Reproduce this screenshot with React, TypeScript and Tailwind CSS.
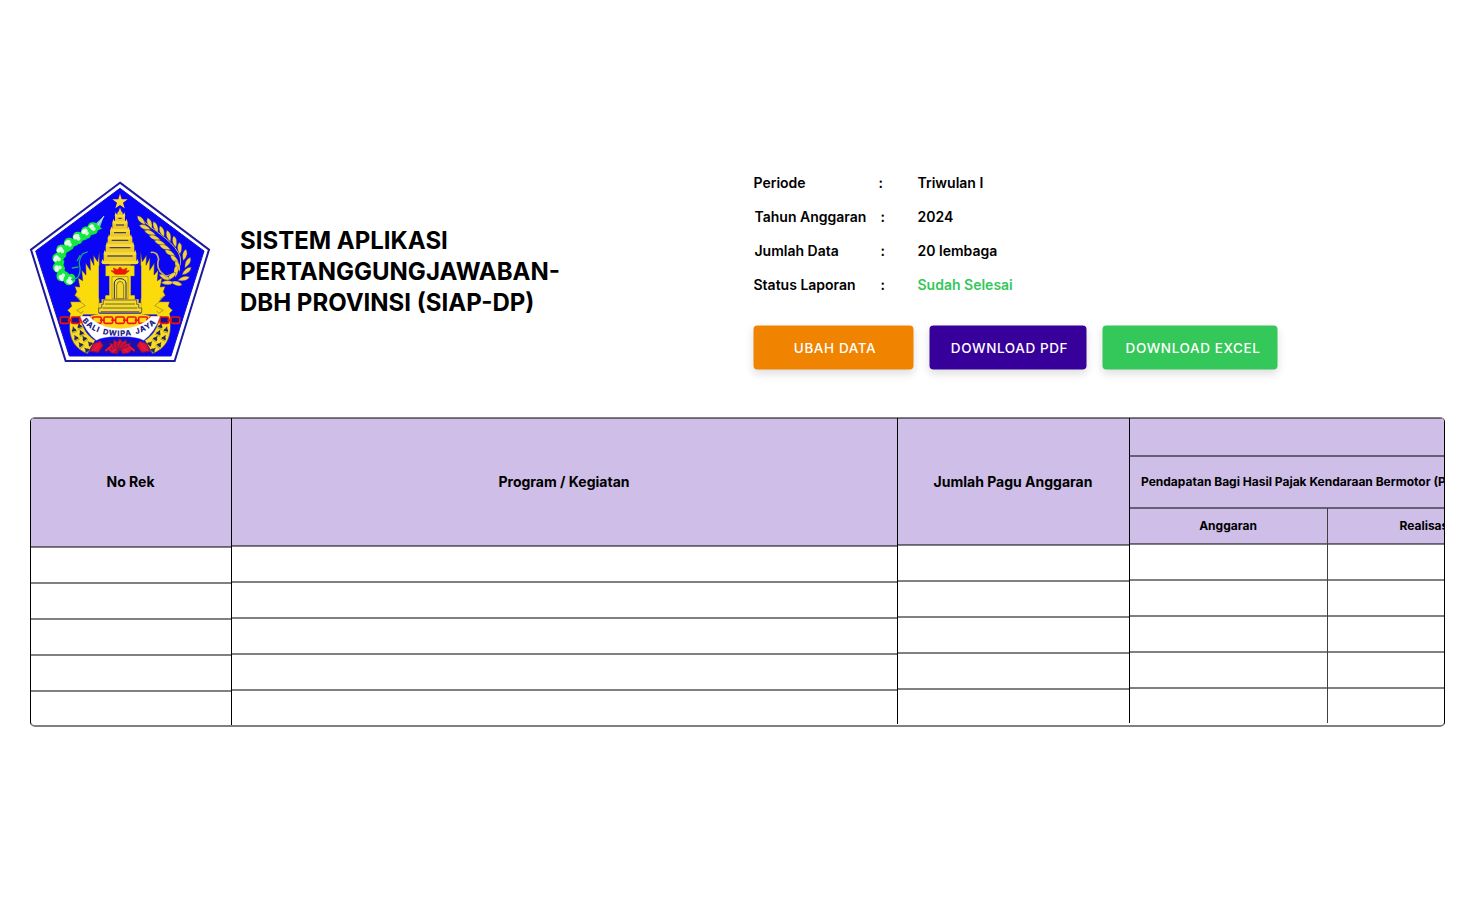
const YELLOW = '#fbdb0c';
const BLUE = '#0a05f5';
const RED = '#f0140c';

const roofTiers = [
  { y: 133, w: 13 },
  { y: 153, w: 20 },
  { y: 176, w: 26 },
  { y: 199, w: 33 },
  { y: 221, w: 39 },
  { y: 246, w: 46 },
  { y: 273, w: 53 },
];

const cotton = [
  [221, 174, -42],
  [201, 187, -38],
  [176, 203, -35],
  [150, 221, -38],
  [127, 241, -45],
  [116, 265, -65],
  [117, 291, -95],
  [127, 316, -130],
  [147, 327, -160],
];

const leaves = [
  [364, 151, 48], [375, 172, 20], [389, 160, 68],
  [390, 188, 20], [407, 171, 68], [404, 203, 20],
  [426, 184, 70], [420, 218, 20], [446, 198, 74],
  [435, 232, 22], [464, 215, 80], [450, 249, 30],
  [479, 235, 88], [464, 268, 45], [494, 255, 102],
  [473, 288, 68], [503, 278, 118], [468, 304, 95],
  [500, 303, 140], [454, 319, 140], [491, 326, 165],
  [433, 321, 205], [469, 340, 195], [441, 338, 180],
];

function Leaf({ x, y, r }: { x: number; y: number; r: number }) {
  return (
    <path
      transform={`translate(${x} ${y}) rotate(${r})`}
      d="M-18 0Q-5 -13 18 0Q-4 13 -18 0Z"
      fill="#f2d33a"
      stroke="#3c3275"
      strokeWidth="1"
    />
  );
}

function SideOrnament() {
  return (
    <g>
      <path
        d="M238 246V434H190L178 456H146L151 430L142 421L155 409L151 395H183L164 376L170 365L164 349L179 351L174 323L188 332L185 300L198 315L197 279L211 301L210 263L222 286L220 255L233 275Z"
        fill={YELLOW}
        stroke="#292576"
        strokeWidth="1.5"
      />
      <path d="M178 393L196 407L170 421L184 430L190 422M164 376L181 387" fill="none" stroke="#8f8030" strokeWidth="2" />
      <path d="M149 455L181 438C187 476 204 499 226 511L202 551C167 537 144 508 149 455Z" fill="#f7dc20" stroke="#35327d" strokeWidth="2" />
      {[
        [161, 477, -15],
        [167, 502, -27],
        [181, 523, -36],
        [199, 539, -46],
        [178, 466, -17],
        [183, 487, -25],
        [192, 504, -34],
        [209, 520, -43],
      ].map(([x, y, r]) => (
        <g key={`${x}-${y}`} transform={`translate(${x} ${y}) rotate(${r})`}>
          <path d="M-7 7Q-7 1 -3 -1L0 -9L3 -1Q7 1 7 7Z" fill="#262364" />
          <path d="M-8 10H8" stroke="#6b6258" strokeWidth="1.5" />
        </g>
      ))}
    </g>
  );
}

function Emblem() {
  return (
    <svg viewBox="30 33 540 540" className="h-[180px] w-[180px] shrink-0 overflow-visible" role="img" aria-label="Bali Dwipa Jaya">
      <path d="M300 38L567 239L464 573H137L33 239Z" fill="#fff" stroke="#1c1a9c" strokeWidth="6" />
      <path d="M300 55L552 243L453 558H148L47 243Z" fill={BLUE} stroke="#1712c0" strokeWidth="3" />
      <path d="M300 71L305 88H323L309 98L314 115L300 105L286 115L291 98L277 88H295Z" fill="#ffdc32" />

      <g>
        <path d="M252 138L241 169L225 181L229 159Z" fill="#70cda9" />
        <path d="M252 138L231 169" stroke="#c6eee9" strokeWidth="3" />
        {cotton.map(([x, y, r]) => (
          <g key={`${x}-${y}`} transform={`translate(${x} ${y}) rotate(${r})`}>
            <path d="M-14 -12Q-3 -24 8 -16Q19 -9 14 3L18 18L4 14Q-7 22 -15 12L-20 1Z" fill="#12e83e" />
            <ellipse cx="-4" cy="-7" rx="10" ry="7" fill="#e9ffed" />
            <circle cx="-2" cy="2" r="6" fill="#d2fbdb" />
          </g>
        ))}
        <path d="M155 328Q182 329 180 293Q173 270 189 251L202 246M172 272L180 257M174 291L157 294" fill="none" stroke="#18a57f" strokeWidth="4" strokeLinecap="round" />
      </g>

      <path d="M354 139C399 182 450 205 475 248C494 284 472 316 426 319" fill="none" stroke="#e2c53e" strokeWidth="3" />
      {leaves.map(([x, y, r]) => <Leaf key={`${x}-${y}`} x={x} y={y} r={r} />)}
      <path d="M394 247Q412 244 416 268Q408 293 425 309L440 322" fill="none" stroke="#c9b057" strokeWidth="5" strokeLinecap="round" />

      <SideOrnament />
      <g transform="translate(600 0) scale(-1 1)"><SideOrnament /></g>

      <path d="M300 113L304 124L308 128V137H315V158H323V180H330V202H337V225H343V250H349V281H332V378H344V390H256V378H268V281H251V250H257V225H263V202H270V180H277V158H285V137H292V128L296 124Z" fill="#ecca2c" />
      {roofTiers.map(({ y, w }) => (
        <g key={y}>
          <path d={`M${300 - w} ${y - 7}Q${300 - w} ${y} ${307 - w} ${y + 1}H${293 + w}Q${300 + w} ${y} ${300 + w} ${y - 7}L${303 + w} ${y + 5}Q${300 + w} ${y + 10} ${292 + w} ${y + 10}H${308 - w}Q${300 - w} ${y + 10} ${297 - w} ${y + 5}Z`} fill="#fbdb30" />
          <path d={`M${308 - w} ${y + 12}H${292 + w}`} stroke="#373174" strokeWidth="3.5" />
        </g>
      ))}
      <path d="M257 287H343V318H331V376H344V388H356V399H364V429H236V399H245V388H257V376H269V318H257Z" fill={YELLOW} stroke="#a08d2b" strokeWidth="1" />
      <path d="M241 287V386M359 287V386" stroke={BLUE} strokeWidth="9" />
      <path d="M276 320H324V386H276Z" fill="#f8e126" stroke="#8e7c25" strokeWidth="2" />
      <path d="M283 386V339Q285 326 300 326Q316 326 318 339V386" fill="none" stroke="#252275" strokeWidth="3" />
      <path d="M290 386V346Q292 334 300 334Q309 334 311 346V386Z" fill="#f4d528" stroke="#57501e" strokeWidth="2" />
      <path d="M250 390H350V403H356V414H365V428H236V414H245V403H250Z" fill="#f7dc24" stroke="#35317c" strokeWidth="2" />
      <path d="M255 402H345M248 414H352M242 425H358" stroke="#504a54" strokeWidth="2.5" />
      <path d="M273 302L283 303L280 294L292 299L300 291L309 299L321 294L318 303L328 302L315 313H286Z" fill={RED} stroke="#c6300e" strokeWidth="2" />

      <path d="M239 431H361L414 443Q367 490 300 490Q231 490 186 443Z" fill="#ffd719" />
      {[134, 167, 199, 231, 265, 300, 335, 369, 401, 433, 466].map((x, i) => (
        <g key={x}>
          <rect x={x - 13} y="441" width="26" height="19" rx="4" fill={i > 1 && i < 9 ? '#ffd91c' : '#151191'} stroke={RED} strokeWidth="5" />
          {i < 10 && <path d={`M${x + 9} 450.5H${x + 25}`} stroke={RED} strokeWidth="5" />}
        </g>
      ))}
      <path d="M181 439H208Q240 475 300 476Q361 475 394 439H420Q405 487 371 511Q347 498 300 500Q252 498 229 511Q196 487 181 439Z" fill="#fff" stroke="#ddd6e7" strokeWidth="1" />
      <path id="motto-arc" d="M186 453Q222 498 300 498Q378 498 420 446" fill="none" />
      <text fontFamily="Inter, sans-serif" fontSize="23" fontWeight="800" fill="#1c1a8a" letterSpacing="2.3" wordSpacing="5">
        <textPath href="#motto-arc">BALI DWIPA JAYA</textPath>
      </text>
      <path d="M228 526Q254 506 300 504Q346 506 372 526L390 550H210Z" fill="#1d0fae" />
      {[-74, -50, -27, 0, 27, 50, 74].map((r) => (
        <path key={r} transform={`translate(300 546) rotate(${r})`} d="M-8 -5L-10 -25L0 -41L10 -25L8 -5Z" fill="#d80e32" stroke="#4c196e" strokeWidth="2" />
      ))}
      <path d="M210 544L220 521L241 513L249 527L235 547ZM390 544L380 521L359 513L351 527L365 547Z" fill="#dc1236" stroke="#791451" strokeWidth="3" />
      <path d="M223 541L237 522M377 541L363 522M256 543L274 528M344 543L326 528M276 546L287 538M324 546L313 538" stroke="#e5183f" strokeWidth="6" />
    </svg>
  );
}

const details = [
  { label: 'Periode', value: 'Triwulan I', inset: '', colon: '', tone: 'text-black' },
  { label: 'Tahun Anggaran', value: '2024', inset: 'pl-px', colon: 'pl-0.5', tone: 'text-black' },
  { label: 'Jumlah Data', value: '20 lembaga', inset: 'pl-px', colon: 'pl-0.5', tone: 'text-black' },
  { label: 'Status Laporan', value: 'Sudah Selesai', inset: '', colon: 'pl-0.5', tone: 'text-[#34c759]' },
];

function Details() {
  return (
    <dl className="text-sm leading-[34px] font-semibold">
      {details.map((d) => (
        <div key={d.label} className="grid h-[34px] grid-cols-[125px_39px_1fr]">
          <dt className={d.inset}>{d.label}</dt>
          <span className={d.colon}>:</span>
          <dd className={d.tone}>{d.value}</dd>
        </div>
      ))}
    </dl>
  );
}

const buttonBase = 'h-11 rounded-[4px] text-[13.5px] font-medium tracking-[0.6px] text-white shadow-[0_4px_8px_rgba(0,0,0,0.13)]';

function Rows({ last }: { last: string }) {
  return (
    <>
      {[0, 1, 2, 3].map((n) => (
        <div key={n} className="h-9 border-y border-[#808080]" />
      ))}
      <div className={`border-t border-[#808080] ${last}`} />
    </>
  );
}

const headCell = 'flex items-center justify-center border-y border-[#675f74] bg-[#cebee8]';

function BudgetTable() {
  return (
    <div className="mx-[30px] flex h-[310px] items-start overflow-hidden rounded-[5px] border-x border-t border-b-2 border-x-black border-t-[#808080] border-b-[#808080] text-sm font-bold">
      <div className="w-[201px] shrink-0 border-r border-black">
        <div className={`${headCell} h-[129px] pr-px pb-0.5`}>No Rek</div>
        <Rows last="h-[34px]" />
      </div>
      <div className="w-[666px] shrink-0 border-r border-black">
        <div className={`${headCell} h-[128px] pr-px`}>Program / Kegiatan</div>
        <Rows last="h-[34px]" />
      </div>
      <div className="w-[232px] shrink-0 border-r border-black">
        <div className={`${headCell} h-[127px] pr-px`}>Jumlah Pagu Anggaran</div>
        <Rows last="h-[34px]" />
      </div>
      <div className="min-w-0 flex-1 overflow-hidden text-xs">
        <div className="h-[38px] border-y border-[#675f74] bg-[#cebee8]" />
        <div className="flex h-[52px] items-center border-y border-[#675f74] bg-[#cebee8] pl-[11px] whitespace-nowrap">
          Pendapatan Bagi Hasil Pajak Kendaraan Bermotor (PKB)
        </div>
        <div className="flex w-[396px]">
          <div className="w-[198px] border-r border-[#404040]">
            <div className={`${headCell} h-9 pr-px`}>Anggaran</div>
            <Rows last="h-[35px]" />
          </div>
          <div className="w-[198px]">
            <div className={`${headCell} h-9 pr-[3px]`}>Realisasi</div>
            <Rows last="h-[35px]" />
          </div>
        </div>
      </div>
    </div>
  );
}

export default function App() {
  return (
    <main className="flex h-[900px] w-[1475px] flex-col overflow-hidden bg-white pt-[165px] font-['Inter',sans-serif] text-black">
      <header className="flex h-[252px] pl-[30px]">
        <div className="flex w-[723px] pt-4">
          <Emblem />
          <h1 className="ml-[30px] pt-[44px] text-2xl leading-[31px] font-bold">
            SISTEM APLIKASI<br />PERTANGGUNGJAWABAN-<br />DBH PROVINSI (SIAP-DP)
          </h1>
        </div>
        <section className="w-[525px] translate-x-[0.5px] translate-y-[0.5px]">
          <Details />
          <div className="mt-6 flex gap-4">
            <button className={`${buttonBase} w-[160px] bg-[#f08300] pl-[3px]`}>UBAH DATA</button>
            <button className={`${buttonBase} w-[157px] bg-[#37009b] pl-[3px]`}>DOWNLOAD PDF</button>
            <button className={`${buttonBase} w-[175px] bg-[#34c759] pl-[6px]`}>DOWNLOAD EXCEL</button>
          </div>
        </section>
      </header>
      <BudgetTable />
    </main>
  );
}
